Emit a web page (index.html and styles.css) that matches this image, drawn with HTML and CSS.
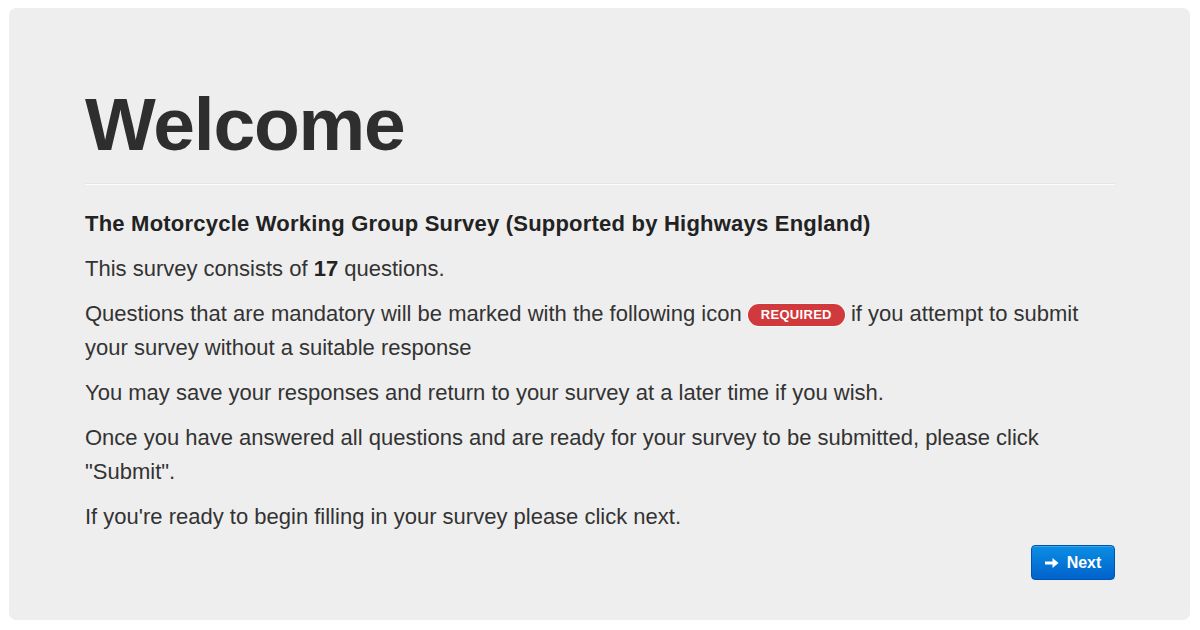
FILE: index.html
```html
<!DOCTYPE html>
<html>
<head>
<meta charset="utf-8">
<link rel="stylesheet" href="styles.css">
</head>
<body>
<div class="card">
  <h1 class="title">Welcome</h1>
  <hr class="rule">
  <p class="lead-strong">The Motorcycle Working Group Survey (Supported by Highways England)</p>
  <p>This survey consists of <strong>17</strong> questions.</p>
  <p>Questions that are mandatory will be marked with the following icon <span class="badge">REQUIRED</span> if you attempt to submit your survey without a suitable response</p>
  <p>You may save your responses and return to your survey at a later time if you wish.</p>
  <p>Once you have answered all questions and are ready for your survey to be submitted, please click "Submit".</p>
  <p>If you're ready to begin filling in your survey please click next.</p>
  <div class="actions">
    <button class="btn-next"><svg class="arrow" width="14" height="12" viewBox="0 0 14 12"><path d="M0 4.5h7.5V1l6 5-6 5V7.5H0z" fill="#fff"/></svg>Next</button>
  </div>
</div>
</body>
</html>
```

FILE: styles.css
```css
html, body {
  margin: 0;
  padding: 0;
  background: #ffffff;
}
body {
  padding: 8px 10px 10px 9px;
  font-family: "Liberation Sans", Arial, Helvetica, sans-serif;
  color: #333333;
}
.card {
  background: #eeeeee;
  border-radius: 7px;
  padding: 76px 75px 40px 76px;
  height: 612px;
  box-sizing: border-box;
}
.title {
  margin: 0;
  font-size: 75px;
  line-height: 80px;
  font-weight: bold;
  letter-spacing: -1.2px;
  color: #2e2e2e;
}
.rule {
  margin: 19px 0 22px 0;
  border: 0;
  border-top: 1px solid #e6e6e6;
  border-bottom: 1px solid #fbfbfb;
  height: 0;
}
.card p {
  margin: 0 0 11px 0;
  font-size: 22px;
  line-height: 34px;
  color: #333333;
}
.card p.lead-strong {
  font-weight: bold;
  color: #222222;
  letter-spacing: 0.22px;
}
.card p strong {
  color: #222222;
}
.badge {
  display: inline-block;
  background: #d13a3c;
  color: #ffffff;
  font-size: 13px;
  font-weight: bold;
  line-height: 22px;
  padding: 0 13px;
  border-radius: 11px;
  vertical-align: 2px;
  box-shadow: 0 0 0 1px rgba(255, 255, 255, 0.6);
  letter-spacing: 0.3px;
}
.actions {
  display: flex;
  justify-content: flex-end;
  margin-top: 0;
}
.btn-next {
  display: flex;
  align-items: center;
  gap: 8px;
  height: 35px;
  width: 84px;
  justify-content: center;
  border: 1px solid #0054b0;
  border-radius: 4px;
  background: linear-gradient(#0b8ee4, #0062cc);
  color: #ffffff;
  font-family: "Liberation Sans", Arial, sans-serif;
  font-size: 16px;
  font-weight: bold;
  padding: 0;
  box-shadow: inset 0 1px 0 rgba(255,255,255,0.2);
}
.arrow {
  display: block;
}
```
